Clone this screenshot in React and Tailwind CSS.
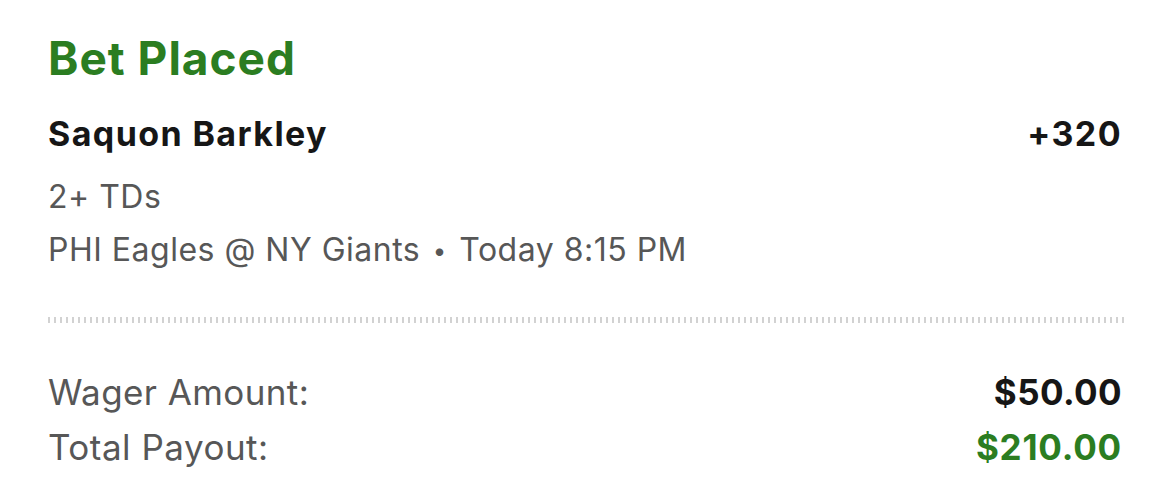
export default function App() {
  return (
    <div className="w-[1170px] h-[497px] bg-white overflow-hidden" style={{ fontFamily: "Inter, 'Noto Sans', sans-serif" }}>
      <div className="pl-[48px] pr-[48px] pt-[30px] flex flex-col">
        <div className="text-[46px] leading-[56px] font-bold text-[#2b7d21] tracking-[1px]">Bet Placed</div>
        <div className="mt-[28px] flex justify-between items-baseline text-[34px] leading-[40px] font-bold text-[#161616] tracking-[1.4px]">
          <span>Saquon Barkley</span>
          <span>+320</span>
        </div>
        <div className="mt-[23px] text-[32px] leading-[40px] text-[#575757] tracking-[0.5px]">2+ TDs</div>
        <div className="mt-[13px] text-[32px] leading-[40px] text-[#575757] tracking-[0.5px]">
          PHI Eagles @ NY Giants <span className="text-[24px] align-[2px] mx-[3px]">•</span> Today 8:15 PM
        </div>
        <div className="mt-[46px] mr-[-3px] h-[6px] bg-[repeating-linear-gradient(90deg,#d2d2d2_0_2px,transparent_2px_6px)]"></div>
        <div className="mt-[47px] flex justify-between items-baseline text-[35px] leading-[44px] tracking-[0.4px]">
          <span className="text-[#575757]">Wager Amount:</span>
          <span className="font-bold text-[#161616]">$50.00</span>
        </div>
        <div className="mt-[11px] flex justify-between items-baseline text-[35px] leading-[44px] tracking-[0.5px]">
          <span className="text-[#575757]">Total Payout:</span>
          <span className="font-bold text-[#2b7d21] tracking-[0.8px]">$210.00</span>
        </div>
      </div>
    </div>
  );
}
